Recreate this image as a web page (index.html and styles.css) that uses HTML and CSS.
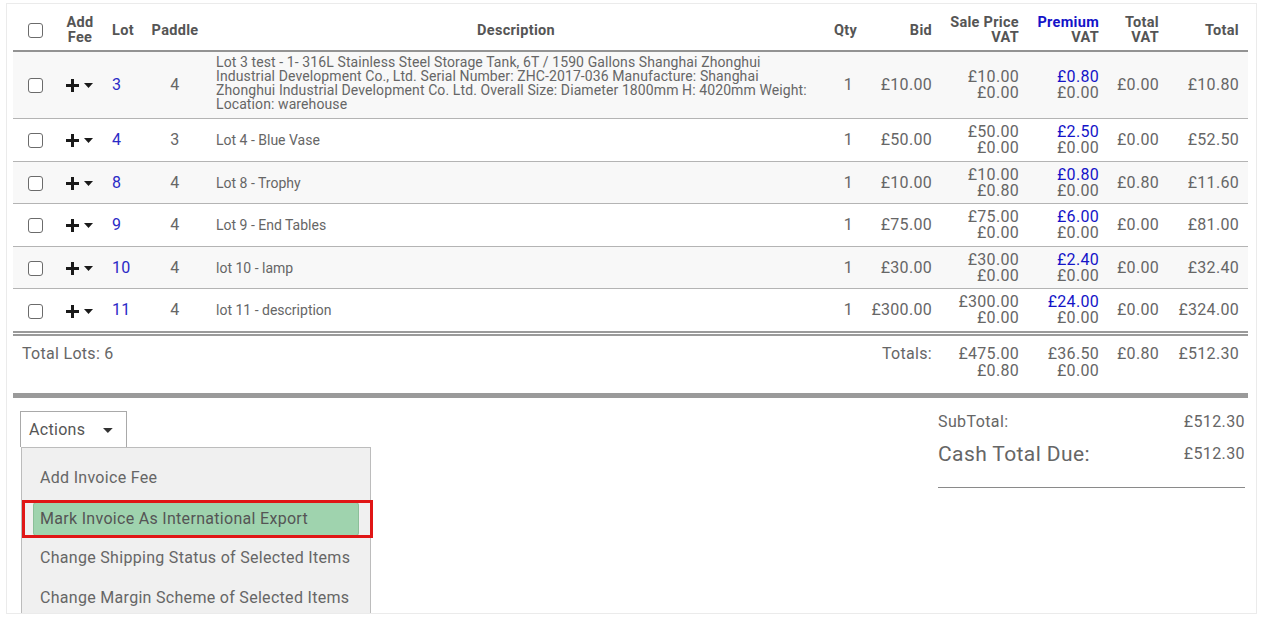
FILE: index.html
```html
<!DOCTYPE html>
<html lang="en">
<head>
    <meta charset="UTF-8">
    <meta name="viewport" content="width=device-width, initial-scale=1.0">
    <title>Invoice Lots</title>
    <link rel="stylesheet" href="styles.css">
</head>
<body>
    <div class="panel">
        <table class="lots">
            <colgroup>
                <col style="width:44px"><col style="width:46px"><col style="width:40px"><col style="width:64px">
                <col style="width:618px"><col style="width:37px"><col style="width:79px"><col style="width:87px">
                <col style="width:80px"><col style="width:60px"><col style="width:80px">
            </colgroup>
            <thead>
                <tr>
                    <th class="c"><span class="check"></span></th>
                    <th class="c">Add<br>Fee</th>
                    <th class="lot">Lot</th>
                    <th class="c">Paddle</th>
                    <th class="c">Description</th>
                    <th class="r">Qty</th>
                    <th class="r">Bid</th>
                    <th class="r">Sale Price<br>VAT</th>
                    <th class="r"><span class="blue">Premium</span><br>VAT</th>
                    <th class="r">Total<br>VAT</th>
                    <th class="r">Total</th>
                </tr>
            </thead>
            <tbody>
                <tr>
                    <td class="c"><span class="check"></span></td>
                    <td class="c"><span class="fee"><svg width="13" height="13" viewBox="0 0 13 13"><rect x="0" y="5" width="13" height="3"/><rect x="5" y="0" width="3" height="13"/></svg><svg width="9" height="5" viewBox="0 0 9 5"><polygon points="0,0 9,0 4.5,5"/></svg></span></td>
                    <td class="lot"><a>3</a></td>
                    <td class="c">4</td>
                    <td class="desc long">Lot 3 test - 1- 316L Stainless Steel Storage Tank, 6T / 1590 Gallons Shanghai Zhonghui<br>Industrial Development Co., Ltd. Serial Number: ZHC-2017-036 Manufacture: Shanghai<br>Zhonghui Industrial Development Co. Ltd. Overall Size: Diameter 1800mm H: 4020mm Weight:<br>Location: warehouse</td>
                    <td class="r">1</td>
                    <td class="r">£10.00</td>
                    <td class="r stack">£10.00<br>£0.00</td>
                    <td class="r stack"><span class="blue">£0.80</span><br>£0.00</td>
                    <td class="r">£0.00</td>
                    <td class="r">£10.80</td>
                </tr>
                <tr>
                    <td class="c"><span class="check"></span></td>
                    <td class="c"><span class="fee"><svg width="13" height="13" viewBox="0 0 13 13"><rect x="0" y="5" width="13" height="3"/><rect x="5" y="0" width="3" height="13"/></svg><svg width="9" height="5" viewBox="0 0 9 5"><polygon points="0,0 9,0 4.5,5"/></svg></span></td>
                    <td class="lot"><a>4</a></td>
                    <td class="c">3</td>
                    <td class="desc">Lot 4 - Blue Vase</td>
                    <td class="r">1</td>
                    <td class="r">£50.00</td>
                    <td class="r stack">£50.00<br>£0.00</td>
                    <td class="r stack"><span class="blue">£2.50</span><br>£0.00</td>
                    <td class="r">£0.00</td>
                    <td class="r">£52.50</td>
                </tr>
                <tr>
                    <td class="c"><span class="check"></span></td>
                    <td class="c"><span class="fee"><svg width="13" height="13" viewBox="0 0 13 13"><rect x="0" y="5" width="13" height="3"/><rect x="5" y="0" width="3" height="13"/></svg><svg width="9" height="5" viewBox="0 0 9 5"><polygon points="0,0 9,0 4.5,5"/></svg></span></td>
                    <td class="lot"><a>8</a></td>
                    <td class="c">4</td>
                    <td class="desc">Lot 8 - Trophy</td>
                    <td class="r">1</td>
                    <td class="r">£10.00</td>
                    <td class="r stack">£10.00<br>£0.80</td>
                    <td class="r stack"><span class="blue">£0.80</span><br>£0.00</td>
                    <td class="r">£0.80</td>
                    <td class="r">£11.60</td>
                </tr>
                <tr>
                    <td class="c"><span class="check"></span></td>
                    <td class="c"><span class="fee"><svg width="13" height="13" viewBox="0 0 13 13"><rect x="0" y="5" width="13" height="3"/><rect x="5" y="0" width="3" height="13"/></svg><svg width="9" height="5" viewBox="0 0 9 5"><polygon points="0,0 9,0 4.5,5"/></svg></span></td>
                    <td class="lot"><a>9</a></td>
                    <td class="c">4</td>
                    <td class="desc">Lot 9 - End Tables</td>
                    <td class="r">1</td>
                    <td class="r">£75.00</td>
                    <td class="r stack">£75.00<br>£0.00</td>
                    <td class="r stack"><span class="blue">£6.00</span><br>£0.00</td>
                    <td class="r">£0.00</td>
                    <td class="r">£81.00</td>
                </tr>
                <tr>
                    <td class="c"><span class="check"></span></td>
                    <td class="c"><span class="fee"><svg width="13" height="13" viewBox="0 0 13 13"><rect x="0" y="5" width="13" height="3"/><rect x="5" y="0" width="3" height="13"/></svg><svg width="9" height="5" viewBox="0 0 9 5"><polygon points="0,0 9,0 4.5,5"/></svg></span></td>
                    <td class="lot"><a>10</a></td>
                    <td class="c">4</td>
                    <td class="desc">lot 10 - lamp</td>
                    <td class="r">1</td>
                    <td class="r">£30.00</td>
                    <td class="r stack">£30.00<br>£0.00</td>
                    <td class="r stack"><span class="blue">£2.40</span><br>£0.00</td>
                    <td class="r">£0.00</td>
                    <td class="r">£32.40</td>
                </tr>
                <tr>
                    <td class="c"><span class="check"></span></td>
                    <td class="c"><span class="fee"><svg width="13" height="13" viewBox="0 0 13 13"><rect x="0" y="5" width="13" height="3"/><rect x="5" y="0" width="3" height="13"/></svg><svg width="9" height="5" viewBox="0 0 9 5"><polygon points="0,0 9,0 4.5,5"/></svg></span></td>
                    <td class="lot"><a>11</a></td>
                    <td class="c">4</td>
                    <td class="desc">lot 11 - description</td>
                    <td class="r">1</td>
                    <td class="r">£300.00</td>
                    <td class="r stack">£300.00<br>£0.00</td>
                    <td class="r stack"><span class="blue">£24.00</span><br>£0.00</td>
                    <td class="r">£0.00</td>
                    <td class="r">£324.00</td>
                </tr>
            </tbody>
            <tfoot>
                <tr>
                    <td colspan="5" class="count">Total Lots: 6</td>
                    <td colspan="2" class="r">Totals:</td>
                    <td class="r">£475.00<br>£0.80</td>
                    <td class="r">£36.50<br>£0.00</td>
                    <td class="r">£0.80</td>
                    <td class="r">£512.30</td>
                </tr>
            </tfoot>
        </table>

        <div class="bottom">
            <div class="actions">
                <div class="actions-btn">
                    Actions
                    <svg width="10" height="5" viewBox="0 0 10 5"><polygon points="0,0 10,0 5,5"/></svg>
                </div>
                <ul class="menu">
                    <li><span>Add Invoice Fee</span></li>
                    <li class="active"><span>Mark Invoice As International Export</span></li>
                    <li><span>Change Shipping Status of Selected Items</span></li>
                    <li><span>Change Margin Scheme of Selected Items</span></li>
                </ul>
            </div>

            <div class="summary">
                <div class="sum-row">
                    <span>SubTotal:</span>
                    <span>£512.30</span>
                </div>
                <div class="sum-row due">
                    <span class="due-label">Cash Total Due:</span>
                    <span>£512.30</span>
                </div>
            </div>
        </div>
    </div>
</body>
</html>
```

FILE: styles.css
```css
body {
    margin: 0;
    font-family: Roboto, "Noto Sans", sans-serif;
    letter-spacing: 0.3px;
    color: #666;
    background: #fff;
}
.panel {
    margin: 3px 0 0 6px;
    width: 1251px;
    height: 611px;
    box-sizing: border-box;
    border: 1px solid #ebebeb;
    padding: 6px 8px 0 6px;
    overflow: hidden;
}
.lots {
    width: 1235px;
    table-layout: fixed;
    border-collapse: collapse;
    font-size: 16px;
}
.lots th {
    height: 40px;
    padding: 0 9px;
    font-size: 14.5px;
    line-height: 15px;
    font-weight: bold;
    color: #555;
    border-bottom: 2px solid #939393;
    vertical-align: middle;
}
.lots td {
    padding: 5px 9px 4.6px;
    line-height: 16px;
    height: 32px;
    border-bottom: 1px solid #b4b4b4;
    vertical-align: middle;
    white-space: nowrap;
}
.lots tbody tr:nth-child(odd) td {
    background: #f8f8f8;
}
.lots tbody tr:last-child td {
    border-bottom: 5px double #9a9a9a;
}
.c {
    text-align: center;
}
.r {
    text-align: right;
}
.lots th.c, .lots td.c {
    padding-left: 0;
    padding-right: 0;
}
.lot {
    text-align: left;
}
.lot a {
    color: #2a2ac6;
}
.blue {
    color: #1414c8;
}
.desc {
    font-size: 14px;
    letter-spacing: 0;
}
.lots td.desc.long {
    font-size: 14px;
    line-height: 14px;
    letter-spacing: 0.1px;
    padding-top: 3px;
    padding-bottom: 7px;
}
.stack {
    line-height: 16px;
}
.check {
    display: inline-block;
    width: 13px;
    height: 13px;
    border: 1.5px solid #6b6b6b;
    border-radius: 3px;
    background: #fff;
    vertical-align: middle;
}
.fee {
    display: inline-flex;
    align-items: center;
    gap: 5px;
    margin-right: 2px;
    vertical-align: middle;
}
.fee svg {
    fill: #1a1a1a;
}
.lots tfoot td {
    padding: 9px 9px 14px;
    height: auto;
    line-height: 17px;
    vertical-align: top;
    border-bottom: 5px solid #9a9a9a;
    background: #fff;
}
.lots tfoot .count {
    padding-left: 9px;
}
.bottom {
    display: flex;
    justify-content: space-between;
    align-items: flex-start;
    padding: 13px 3px 0 7px;
}
.actions {
    width: 354px;
}
.actions-btn {
    display: inline-flex;
    align-items: center;
    gap: 18px;
    height: 36px;
    box-sizing: border-box;
    padding: 0 13px 0 8px;
    width: 107px;
    border: 1px solid #a9a9a9;
    border-bottom: none;
    background: #fff;
    font-size: 16px;
    color: #555;
}
.actions-btn svg {
    fill: #333;
    margin-top: 3px;
}
.menu {
    list-style: none;
    margin: 0 0 0 1px;
    padding: 11px 0 40px;
    width: 350px;
    box-sizing: border-box;
    background: #f0f0f0;
    border: 1px solid #bcbcbc;
}
.menu li {
    height: 40px;
    box-sizing: border-box;
    padding: 3px 11px;
    font-size: 16px;
}
.menu li span {
    display: block;
    height: 34px;
    line-height: 32px;
    padding-left: 7px;
    color: #666;
}
.menu li.active span {
    position: relative;
    background: #9fd3ae;
    border: 1px solid #8bbf99;
    border-radius: 3px;
    box-sizing: border-box;
    padding-left: 6px;
    color: #555;
}
.menu li.active span::after {
    content: "";
    position: absolute;
    left: -12px;
    right: -15px;
    top: -3px;
    bottom: -3px;
    border: 3px solid #e01616;
}
.summary {
    width: 307px;
    padding-bottom: 21px;
    border-bottom: 1.5px solid #8a8a8a;
}
.sum-row {
    display: flex;
    justify-content: space-between;
    font-size: 16px;
    line-height: 22px;
    letter-spacing: 0.4px;
}
.sum-row.due {
    margin-top: 9px;
    line-height: 24px;
}
.due-label {
    font-size: 21px;
}
```
